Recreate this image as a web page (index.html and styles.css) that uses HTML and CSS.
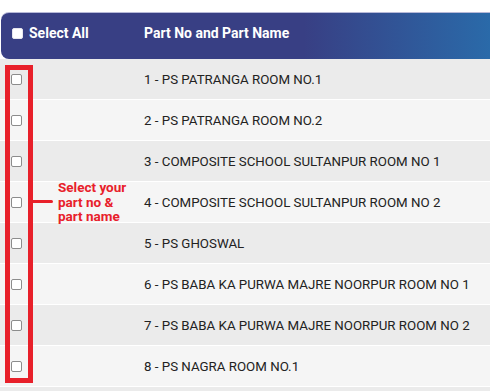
FILE: index.html
```html
<!DOCTYPE html>
<html>
  <head>
    <title>part list</title>
    <link rel="stylesheet" href="styles.css">
  </head>
  <body>
    <div class="wrap">
      <div class="head">
        <label class="cell-check"><input type="checkbox"> Select All</label>
        <div class="cell-name">Part No and Part Name</div>
      </div>
      <div class="rows">
        <div class="row"><div class="cell-check"><input type="checkbox"></div><div class="cell-name">1 - PS PATRANGA ROOM NO.1</div></div>
        <div class="row"><div class="cell-check"><input type="checkbox"></div><div class="cell-name">2 - PS PATRANGA ROOM NO.2</div></div>
        <div class="row"><div class="cell-check"><input type="checkbox"></div><div class="cell-name">3 - COMPOSITE SCHOOL SULTANPUR ROOM NO 1</div></div>
        <div class="row"><div class="cell-check"><input type="checkbox"></div><div class="cell-name">4 - COMPOSITE SCHOOL SULTANPUR ROOM NO 2</div></div>
        <div class="row"><div class="cell-check"><input type="checkbox"></div><div class="cell-name">5 - PS GHOSWAL</div></div>
        <div class="row"><div class="cell-check"><input type="checkbox"></div><div class="cell-name">6 - PS BABA KA PURWA MAJRE NOORPUR ROOM NO 1</div></div>
        <div class="row"><div class="cell-check"><input type="checkbox"></div><div class="cell-name">7 - PS BABA KA PURWA MAJRE NOORPUR ROOM NO 2</div></div>
        <div class="row"><div class="cell-check"><input type="checkbox"></div><div class="cell-name">8 - PS NAGRA ROOM NO.1</div></div>
        <div class="row"></div>
      </div>
      <div class="mark"></div>
      <div class="note">
        <span class="pointer"></span>
        <p>Select your<br>part no &amp;<br>part name</p>
      </div>
    </div>
  </body>
</html>
```

FILE: styles.css
```css
body{
  margin: 0;
  font-family: Roboto, "Liberation Sans", Arial, sans-serif;
  background: #fff;
  overflow: hidden;
}
.wrap{
  position: relative;
  width: 490px;
  height: 391px;
  padding-top: 12px;
  box-sizing: border-box;
  overflow: hidden;
}
.head{
  display: grid;
  grid-template-columns: 143px 1fr;
  align-items: center;
  height: 47px;
  padding-bottom: 6px;
  margin-left: 1px;
  border-radius: 8px 0 0 8px;
  background: linear-gradient(to right, #383f84 62%, #2a6aa9);
  border-top: 1px solid #b7b9d8;
  box-sizing: border-box;
  color: #fff;
  font-weight: bold;
  font-size: 14px;
}
.head .cell-check{
  display: flex;
  align-items: center;
  gap: 6px;
  padding-left: 11px;
}
input[type=checkbox]{
  appearance: none;
  margin: 0;
  width: 11px;
  height: 11px;
  border: 1px solid #8c8c8c;
  border-radius: 2px;
  background: #fff;
}
.head input[type=checkbox]{
  border-color: #e6e6ee;
}
.row{
  display: grid;
  grid-template-columns: 144px 1fr;
  align-items: center;
  height: 40px;
  border-bottom: 1px solid #fff;
  background: #f5f5f5;
  font-size: 13.3px;
  color: #222;
}
.row:nth-child(odd){
  background: #ebebeb;
}
.row .cell-check{
  padding-left: 11px;
  display: flex;
  align-items: center;
}
.mark{
  position: absolute;
  left: 5px;
  top: 65px;
  width: 18px;
  height: 308px;
  border: 5px solid #e8202a;
}
.note{
  position: absolute;
  left: 33px;
  top: 180px;
  display: flex;
  align-items: center;
  gap: 5px;
}
.pointer{
  display: block;
  width: 20px;
  height: 3px;
  background: #e8202a;
  border-radius: 0 2px 2px 0;
}
.note p{
  margin: 0;
  color: #e8202a;
  font-weight: bold;
  font-size: 13.5px;
  line-height: 14.5px;
}
```
